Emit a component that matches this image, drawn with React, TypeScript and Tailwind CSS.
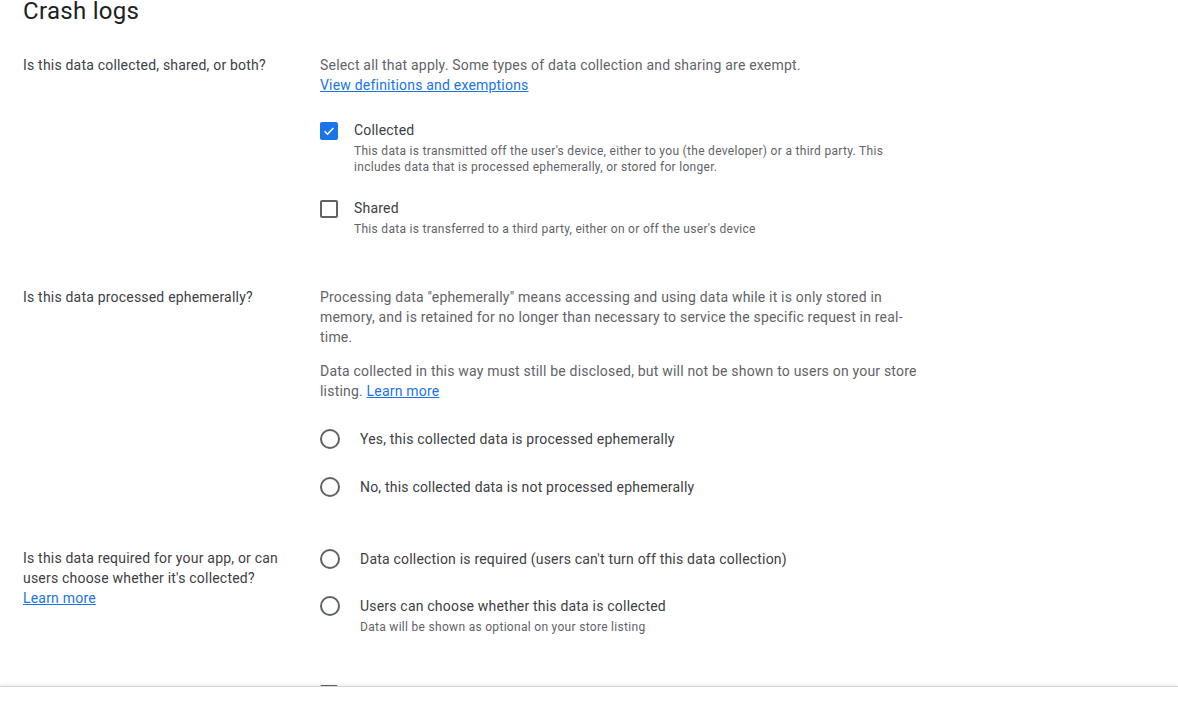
import React from "react";

function Checkbox({ checked }: { checked?: boolean }) {
  if (checked) {
    return (
      <div className="w-[18px] h-[18px] rounded-[2px] bg-[#1a73e8] flex items-center justify-center">
        <svg width="14" height="14" viewBox="0 0 24 24" fill="none">
          <path d="M4.5 12.5l5 5 10-10.5" stroke="#fff" strokeWidth="2.6" />
        </svg>
      </div>
    );
  }
  return <div className="w-[18px] h-[18px] rounded-[2px] border-2 border-[#5f6368]" />;
}

function Radio() {
  return <div className="w-5 h-5 rounded-full border-2 border-[#5f6368] shrink-0" />;
}

function CheckOption({
  checked,
  label,
  desc,
  className,
  descClass,
}: {
  checked?: boolean;
  label: string;
  desc?: string;
  className?: string;
  descClass?: string;
}) {
  return (
    <div className={"flex " + (className ?? "")}>
      <div className="w-[34px] shrink-0 pt-[2px]">
        <Checkbox checked={checked} />
      </div>
      <div className="w-[566px]">
        <div className="text-[14px] leading-5 tracking-[0.2px] text-[#3c4043]">{label}</div>
        {desc && (
          <div className={"text-[12px] leading-4 tracking-[0.3px] text-[#5f6368] " + (descClass ?? "")}>
            {desc}
          </div>
        )}
      </div>
    </div>
  );
}

function RadioOption({ label, className }: { label: string; className?: string }) {
  return (
    <div className={"flex items-center h-5 " + (className ?? "")}>
      <Radio />
      <span className="ml-5 text-[14px] leading-5 tracking-[0.2px] text-[#3c4043]">{label}</span>
    </div>
  );
}

export default function App() {
  return (
    <div
      className="h-[713px] w-full bg-white flex flex-col overflow-hidden text-[14px] leading-5"
      style={{ fontFamily: "Roboto, 'Liberation Sans', sans-serif" }}
    >
      <div className="flex-1 overflow-hidden px-[23px]">
        <h1 className="mt-[-5px] text-[24px] leading-8 tracking-[0.3px] text-[#202124] font-normal">
          Crash logs
        </h1>

        {/* collected / shared */}
        <div className="mt-[28px] grid grid-cols-[297px_600px]">
          <div className="pr-6 tracking-[0.2px] text-[#3c4043]">Is this data collected, shared, or both?</div>
          <div>
            <p className="tracking-[0.2px] text-[#5f6368]">
              Select all that apply. Some types of data collection and sharing are exempt.
            </p>
            <div>
              <a href="#" className="tracking-[0.2px] text-[#1a73e8] underline">
                View definitions and exemptions
              </a>
            </div>
            <CheckOption
              className="mt-[25px]"
              checked
              label="Collected"
              descClass="mt-[3px]"
              desc="This data is transmitted off the user's device, either to you (the developer) or a third party. This includes data that is processed ephemerally, or stored for longer."
            />
            <CheckOption
              className="mt-[23px]"
              label="Shared"
              descClass="mt-[3px]"
              desc="This data is transferred to a third party, either on or off the user's device"
            />
          </div>
        </div>

        {/* ephemeral */}
        <div className="mt-[50px] grid grid-cols-[297px_600px]">
          <div className="pr-6 tracking-[0.2px] text-[#3c4043]">Is this data processed ephemerally?</div>
          <div>
            <p className="tracking-[0.2px] text-[#5f6368]">
              Processing data "ephemerally" means accessing and using data while it is only stored in
              memory, and is retained for no longer than necessary to service the specific request in
              real-time.
            </p>
            <p className="mt-[14px] tracking-[0.2px] text-[#5f6368]">
              Data collected in this way must still be disclosed, but will not be shown to users on your
              store listing.{" "}
              <a href="#" className="text-[#1a73e8] underline">
                Learn more
              </a>
            </p>
            <RadioOption className="mt-[28px]" label="Yes, this collected data is processed ephemerally" />
            <RadioOption className="mt-[28px]" label="No, this collected data is not processed ephemerally" />
          </div>
        </div>

        {/* required / optional */}
        <div className="mt-[51px] grid grid-cols-[297px_600px]">
          <div className="pr-6 tracking-[0.2px] text-[#3c4043]">
            Is this data required for your app, or can users choose whether it's collected?
            <br />
            <a href="#" className="text-[#1a73e8] underline">
              Learn more
            </a>
          </div>
          <div className="pt-px">
            <RadioOption label="Data collection is required (users can't turn off this data collection)" />
            <RadioOption className="mt-[27px]" label="Users can choose whether this data is collected" />
            <div className="mt-[3px] ml-10 text-[12px] leading-4 tracking-[0.3px] text-[#5f6368]">
              Data will be shown as optional on your store listing
            </div>
          </div>
        </div>

        {/* purposes, cut off by the footer */}
        <div className="mt-[48px] grid grid-cols-[297px_600px]">
          <div />
          <div>
            <CheckOption label="App functionality" />
          </div>
        </div>
      </div>

      <div className="relative z-10 h-[27px] shrink-0 bg-white border-t border-[#d5d5d5] shadow-[0_-2px_3px_rgba(0,0,0,0.06)]" />
    </div>
  );
}
